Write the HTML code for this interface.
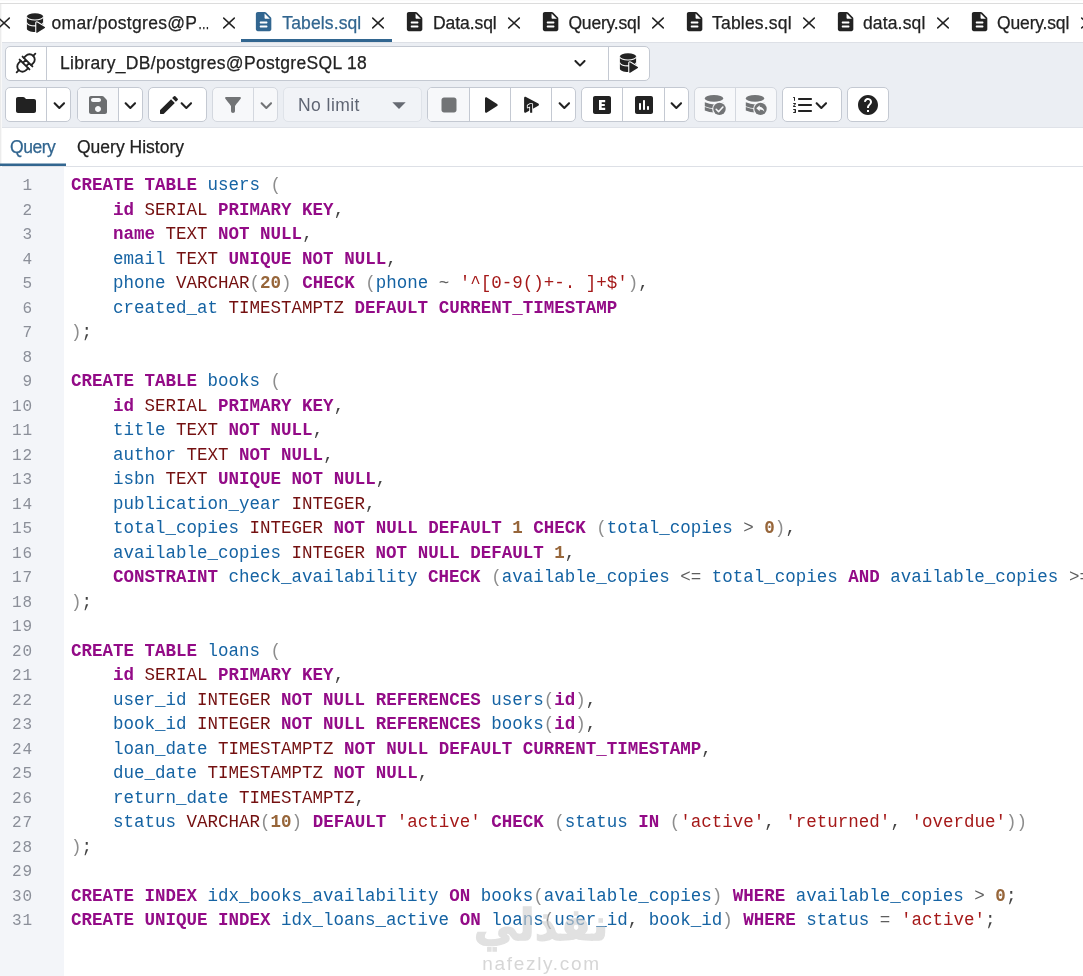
<!DOCTYPE html>
<html lang="en">
<head>
<meta charset="utf-8">
<title>pgAdmin Query Tool - Tabels.sql</title>
<style>
*{box-sizing:border-box;margin:0;padding:0}
html,body{width:1083px;height:976px;overflow:hidden;background:#fff}
body{position:relative;font-family:"Liberation Sans",sans-serif;font-size:17.5px;color:#222}
.abs{position:absolute}
#ln,#code,#tabs,#qtabs span,#conn,#sel span{will-change:transform}
.tl,#qtabs span,#conn{-webkit-text-stroke:.25px currentColor}
#topline{left:0;top:3px;width:1083px;height:1px;background:#dcdcdc}
#top0{left:0;top:0;width:1083px;height:1px;background:#fbfbfb}
#leftedge{left:0;top:4px;width:2px;height:972px;background:linear-gradient(to right,#ececec 0,#ececec 50%,#f8f8f8 50%)}
/* ---------- dock tabs ---------- */
#tabs{left:0;top:4px;width:1083px;height:38px;white-space:nowrap;overflow:hidden}
.tl{position:absolute;top:8px;height:22px;line-height:22px;font-size:17.5px;color:#222;white-space:nowrap}
.tl.act{color:#326690}
#tabul{left:241px;top:39px;width:151px;height:3px;background:#326690}
/* ---------- toolbar ---------- */
#tbbg{left:2px;top:42px;width:1081px;height:86px;background:#ebeef3;border-top:1px solid #dde0e6;border-bottom:1px solid #dfe2e8}
.grp{position:absolute;height:35px;border:1px solid #c4c9d2;border-radius:5px;background:#fff;overflow:hidden}
.grp.dis{background:#f7f8fa;border-color:#d4d8df}
.grp i{position:absolute;top:0;width:1px;height:34px;background:#c4c9d2}
.grp.dis i{background:#d4d8df}
.grp b{position:absolute;top:0;height:34px;background:#f7f8fa}
#conn{line-height:22px;font-size:17.5px;color:#222;white-space:nowrap;letter-spacing:.33px}
#sel{height:35px;border:1px solid #dfe3e9;border-radius:5px;background:#f1f3f7}
#sel span{position:absolute;left:14px;top:6px;line-height:22px;font-size:17.5px;color:#5f6573;letter-spacing:.45px;white-space:nowrap}
/* ---------- query tabs ---------- */
#qtabs{left:2px;top:128px;width:1081px;height:39px;background:#fff;border-bottom:1px solid #dde0e6}
#qtabs span{position:absolute;top:8px;line-height:22px;font-size:17.5px}
#qul{left:0;top:164px;width:66px;height:2px;background:#326690;box-shadow:0 -1px 0 rgba(50,102,144,.5)}
/* ---------- editor ---------- */
#gutter{left:0;top:167px;width:64px;height:809px;background:#f3f5f9}
#ln,#code{position:absolute;top:173.3px;font-family:"Liberation Mono",monospace;font-size:17.5px;line-height:24.5px}
#ln{left:0;top:174.1px;width:33px;text-align:right;color:#8b8f99;font-size:16px;letter-spacing:.9px}
#code{left:71px;color:#222}
#code div,#ln div{height:24.5px;white-space:pre}
.k{color:#930b87;font-weight:bold}
.t{color:#741010}
.v{color:#1563a3}
.n{color:#97663a;font-weight:bold}
.s{color:#a51919}
.p{color:#8d8d8d}
.o{color:#444}
.q{color:#5e5e5e}
/* ---------- watermark ---------- */
#wm1,#wm2{white-space:nowrap}
#wm1{left:470px;top:895px;width:142px;text-align:center;font-family:"DejaVu Sans",sans-serif;font-weight:bold;font-size:44px;line-height:60px;direction:rtl;color:#d0d0d0;-webkit-text-stroke:1.3px #d0d0d0;opacity:.64}
#wm2{left:470px;top:950.6px;width:143px;text-align:center;font-family:"Liberation Sans",sans-serif;font-size:19px;line-height:26px;letter-spacing:1.7px;color:#c8c8c8;opacity:.75}
</style>
</head>
<body>
<div class="abs" id="top0"></div>
<div class="abs" id="topline"></div>
<div class="abs" id="leftedge"></div>
<div class="abs" id="tabs">
<svg class="abs" style="left:-2.80px;top:11.50px" width="14" height="14" viewBox="-7 -7 14 14"><path d="M-5.300 -4.900L5.300 4.900M5.300 -4.900L-5.300 4.900" fill="none" stroke="#222" stroke-width="1.450" stroke-linecap="round"/></svg>
<svg class="abs" style="left:26.00px;top:8.00px" width="20" height="22" viewBox="0 0 20 22" fill="#222"><path d="M0.900 4.400v12.300c0 1.800 3.600 3.200 8.100 3.200s8.100-1.400 8.100-3.200V4.400z"/><ellipse cx="9" cy="4.400" rx="8.100" ry="3.200"/><path d="M0.700 4.800a8.300 3.250 0 0 0 16.600 0M0.700 10.600a8.300 3.250 0 0 0 16.600 0" fill="none" stroke="#fff" stroke-width="1.100"/><path d="M10.300 10.900v9.400c0 .5.500.8.900.5l7.600-4.700c.4-.25.400-.75 0-1l-7.600-4.700c-.4-.3-.9 0-.9.500z" stroke="#fff" stroke-width="2.200" stroke-linejoin="round"/><path d="M10.300 10.900v9.400c0 .5.500.8.900.5l7.600-4.700c.4-.25.400-.75 0-1l-7.600-4.700c-.4-.3-.9 0-.9.500z"/></svg>
<span class="tl" style="left:51.5px;letter-spacing:.3px">omar/postgres@P<span style="display:inline-block;letter-spacing:0;width:11px;margin-left:.8px;transform:scaleX(.66);transform-origin:0 50%">…</span></span>
<svg class="abs" style="left:221.90px;top:11.50px" width="14" height="14" viewBox="-7 -7 14 14"><path d="M-5.300 -4.900L5.300 4.900M5.300 -4.900L-5.300 4.900" fill="none" stroke="#222" stroke-width="1.450" stroke-linecap="round"/></svg>
<svg class="abs" style="left:252.13px;top:6.40px" width="23.2" height="23.2" viewBox="0 0 24 24" fill="#326690"><path d="M14.59 2.59c-.38-.38-.89-.59-1.42-.59H6c-1.1 0-2 .9-2 2v16c0 1.1.89 2 1.99 2H18c1.1 0 2-.9 2-2V8.83c0-.53-.21-1.04-.59-1.41l-4.82-4.83zM15 18H9c-.55 0-1-.45-1-1s.45-1 1-1h6c.55 0 1 .45 1 1s-.45 1-1 1zm0-4H9c-.55 0-1-.45-1-1s.45-1 1-1h6c.55 0 1 .45 1 1s-.45 1-1 1zm-2-6V3.5L18.5 9H14c-.55 0-1-.45-1-1z"/></svg>
<span class="tl act" style="left:282.3px;letter-spacing:0.127px">Tabels.sql</span>
<svg class="abs" style="left:371.20px;top:11.50px" width="14" height="14" viewBox="-7 -7 14 14"><path d="M-5.300 -4.900L5.300 4.900M5.300 -4.900L-5.300 4.900" fill="none" stroke="#222" stroke-width="1.450" stroke-linecap="round"/></svg>
<svg class="abs" style="left:403.23px;top:6.40px" width="23.2" height="23.2" viewBox="0 0 24 24" fill="#222"><path d="M14.59 2.59c-.38-.38-.89-.59-1.42-.59H6c-1.1 0-2 .9-2 2v16c0 1.1.89 2 1.99 2H18c1.1 0 2-.9 2-2V8.83c0-.53-.21-1.04-.59-1.41l-4.82-4.83zM15 18H9c-.55 0-1-.45-1-1s.45-1 1-1h6c.55 0 1 .45 1 1s-.45 1-1 1zm0-4H9c-.55 0-1-.45-1-1s.45-1 1-1h6c.55 0 1 .45 1 1s-.45 1-1 1zm-2-6V3.5L18.5 9H14c-.55 0-1-.45-1-1z"/></svg>
<span class="tl" style="left:433.0px;letter-spacing:-0.063px">Data.sql</span>
<svg class="abs" style="left:506.90px;top:11.50px" width="14" height="14" viewBox="-7 -7 14 14"><path d="M-5.300 -4.900L5.300 4.900M5.300 -4.900L-5.300 4.900" fill="none" stroke="#222" stroke-width="1.450" stroke-linecap="round"/></svg>
<svg class="abs" style="left:538.53px;top:6.40px" width="23.2" height="23.2" viewBox="0 0 24 24" fill="#222"><path d="M14.59 2.59c-.38-.38-.89-.59-1.42-.59H6c-1.1 0-2 .9-2 2v16c0 1.1.89 2 1.99 2H18c1.1 0 2-.9 2-2V8.83c0-.53-.21-1.04-.59-1.41l-4.82-4.83zM15 18H9c-.55 0-1-.45-1-1s.45-1 1-1h6c.55 0 1 .45 1 1s-.45 1-1 1zm0-4H9c-.55 0-1-.45-1-1s.45-1 1-1h6c.55 0 1 .45 1 1s-.45 1-1 1zm-2-6V3.5L18.5 9H14c-.55 0-1-.45-1-1z"/></svg>
<span class="tl" style="left:568.4px;letter-spacing:-0.177px">Query.sql</span>
<svg class="abs" style="left:650.80px;top:11.50px" width="14" height="14" viewBox="-7 -7 14 14"><path d="M-5.300 -4.900L5.300 4.900M5.300 -4.900L-5.300 4.900" fill="none" stroke="#222" stroke-width="1.450" stroke-linecap="round"/></svg>
<svg class="abs" style="left:682.73px;top:6.40px" width="23.2" height="23.2" viewBox="0 0 24 24" fill="#222"><path d="M14.59 2.59c-.38-.38-.89-.59-1.42-.59H6c-1.1 0-2 .9-2 2v16c0 1.1.89 2 1.99 2H18c1.1 0 2-.9 2-2V8.83c0-.53-.21-1.04-.59-1.41l-4.82-4.83zM15 18H9c-.55 0-1-.45-1-1s.45-1 1-1h6c.55 0 1 .45 1 1s-.45 1-1 1zm0-4H9c-.55 0-1-.45-1-1s.45-1 1-1h6c.55 0 1 .45 1 1s-.45 1-1 1zm-2-6V3.5L18.5 9H14c-.55 0-1-.45-1-1z"/></svg>
<span class="tl" style="left:712.0px;letter-spacing:0.197px">Tables.sql</span>
<svg class="abs" style="left:802.00px;top:11.50px" width="14" height="14" viewBox="-7 -7 14 14"><path d="M-5.300 -4.900L5.300 4.900M5.300 -4.900L-5.300 4.900" fill="none" stroke="#222" stroke-width="1.450" stroke-linecap="round"/></svg>
<svg class="abs" style="left:833.73px;top:6.40px" width="23.2" height="23.2" viewBox="0 0 24 24" fill="#222"><path d="M14.59 2.59c-.38-.38-.89-.59-1.42-.59H6c-1.1 0-2 .9-2 2v16c0 1.1.89 2 1.99 2H18c1.1 0 2-.9 2-2V8.83c0-.53-.21-1.04-.59-1.41l-4.82-4.83zM15 18H9c-.55 0-1-.45-1-1s.45-1 1-1h6c.55 0 1 .45 1 1s-.45 1-1 1zm0-4H9c-.55 0-1-.45-1-1s.45-1 1-1h6c.55 0 1 .45 1 1s-.45 1-1 1zm-2-6V3.5L18.5 9H14c-.55 0-1-.45-1-1z"/></svg>
<span class="tl" style="left:862.9px;letter-spacing:0.163px">data.sql</span>
<svg class="abs" style="left:935.90px;top:11.50px" width="14" height="14" viewBox="-7 -7 14 14"><path d="M-5.300 -4.900L5.300 4.900M5.300 -4.900L-5.300 4.900" fill="none" stroke="#222" stroke-width="1.450" stroke-linecap="round"/></svg>
<svg class="abs" style="left:967.73px;top:6.40px" width="23.2" height="23.2" viewBox="0 0 24 24" fill="#222"><path d="M14.59 2.59c-.38-.38-.89-.59-1.42-.59H6c-1.1 0-2 .9-2 2v16c0 1.1.89 2 1.99 2H18c1.1 0 2-.9 2-2V8.83c0-.53-.21-1.04-.59-1.41l-4.82-4.83zM15 18H9c-.55 0-1-.45-1-1s.45-1 1-1h6c.55 0 1 .45 1 1s-.45 1-1 1zm0-4H9c-.55 0-1-.45-1-1s.45-1 1-1h6c.55 0 1 .45 1 1s-.45 1-1 1zm-2-6V3.5L18.5 9H14c-.55 0-1-.45-1-1z"/></svg>
<span class="tl" style="left:997.1px;letter-spacing:-0.177px">Query.sql</span>
<svg class="abs" style="left:1079.80px;top:11.50px" width="14" height="14" viewBox="-7 -7 14 14"><path d="M-5.300 -4.900L5.300 4.900M5.300 -4.900L-5.300 4.900" fill="none" stroke="#222" stroke-width="1.450" stroke-linecap="round"/></svg>
</div>
<div class="abs" id="tabul"></div>
<div class="abs" id="tbbg"></div>
<!--TB-->
<div class="grp" style="left:5px;top:46px;width:645px"><i style="left:40px"></i><i style="left:602px"></i></div>
<svg class="abs" style="left:10.80px;top:48.00px;overflow:visible" width="30" height="30" viewBox="-15 -15 30 30"><g transform="rotate(-45)" fill="none" stroke="#222" stroke-width="1.850" stroke-linecap="round" stroke-linejoin="round"><path d="M-13.200 0H-10.200M13.200 0H10.200"/><path d="M-2.100 -5.200H-5A5.200 5.200 0 0 0 -5 5.200H-2.100M2.100 -5.200H5A5.200 5.200 0 0 1 5 5.200H2.100"/><path d="M-2.100 -7V7M2.100 -7V7M-2.100 -2.300H2.100M-2.100 2.300H2.100"/></g></svg>
<span class="abs" id="conn" style="left:60px;top:52.4px">Library_DB/postgres@PostgreSQL 18</span>
<svg class="abs" style="left:568.00px;top:51.40px" width="24" height="24" viewBox="0 0 24 24" fill="#222"><path d="M8.12 9.29 12 13.17l3.88-3.88c.39-.39 1.02-.39 1.41 0 .39.39.39 1.02 0 1.41l-4.59 4.59c-.39.39-1.02.39-1.41 0L6.7 10.7a.9959.9959 0 0 1 0-1.41c.39-.38 1.03-.39 1.42 0z"/></svg>
<svg class="abs" style="left:618.90px;top:52.20px" width="20" height="22" viewBox="0 0 20 22" fill="#222"><path d="M0.900 4.400v12.300c0 1.800 3.600 3.200 8.100 3.200s8.100-1.400 8.100-3.200V4.400z"/><ellipse cx="9" cy="4.400" rx="8.100" ry="3.200"/><path d="M0.700 4.800a8.300 3.250 0 0 0 16.600 0M0.700 10.600a8.300 3.250 0 0 0 16.600 0" fill="none" stroke="#fff" stroke-width="1.100"/><path d="M10.300 10.900v9.400c0 .5.500.8.900.5l7.600-4.700c.4-.25.400-.75 0-1l-7.600-4.700c-.4-.3-.9 0-.9.500z" stroke="#fff" stroke-width="2.200" stroke-linejoin="round"/><path d="M10.300 10.900v9.400c0 .5.500.8.900.5l7.600-4.700c.4-.25.400-.75 0-1l-7.600-4.700c-.4-.3-.9 0-.9.500z"/></svg>
<div class="grp" style="left:5px;top:87px;width:66px"><i style="left:40px"></i></div>
<svg class="abs" style="left:14.00px;top:92.80px" width="24" height="24" viewBox="0 0 24 24" fill="#222"><path d="M10.59 4.59C10.21 4.21 9.7 4 9.17 4H4c-1.1 0-1.99.9-1.99 2L2 18c0 1.1.9 2 2 2h16c1.1 0 2-.9 2-2V8c0-1.1-.9-2-2-2h-8l-1.41-1.41z"/></svg>
<svg class="abs" style="left:46.85px;top:92.65px" width="24.7" height="24.7" viewBox="0 0 24 24" fill="#222"><path d="M8.12 9.29 12 13.17l3.88-3.88c.39-.39 1.02-.39 1.41 0 .39.39.39 1.02 0 1.41l-4.59 4.59c-.39.39-1.02.39-1.41 0L6.7 10.7a.9959.9959 0 0 1 0-1.41c.39-.38 1.03-.39 1.42 0z"/></svg>
<div class="grp" style="left:77px;top:87px;width:66px"><b style="left:-1px;width:41px"></b><i style="left:40px"></i></div>
<svg class="abs" style="left:85.90px;top:93.10px" width="24" height="24" viewBox="0 0 24 24" fill="#6c6e70"><path d="M17.59 3.59c-.38-.38-.89-.59-1.42-.59H5c-1.11 0-2 .9-2 2v14c0 1.1.9 2 2 2h14c1.1 0 2-.9 2-2V7.83c0-.53-.21-1.04-.59-1.41l-2.82-2.83zM12 19c-1.66 0-3-1.34-3-3s1.34-3 3-3 3 1.34 3 3-1.34 3-3 3zm1-10H7c-1.1 0-2-.9-2-2s.9-2 2-2h6c1.1 0 2 .9 2 2s-.9 2-2 2z"/></svg>
<svg class="abs" style="left:118.45px;top:92.65px" width="24.7" height="24.7" viewBox="0 0 24 24" fill="#222"><path d="M8.12 9.29 12 13.17l3.88-3.88c.39-.39 1.02-.39 1.41 0 .39.39.39 1.02 0 1.41l-4.59 4.59c-.39.39-1.02.39-1.41 0L6.7 10.7a.9959.9959 0 0 1 0-1.41c.39-.38 1.03-.39 1.42 0z"/></svg>
<div class="grp" style="left:148px;top:87px;width:59px"></div>
<svg class="abs" style="left:157.00px;top:92.80px" width="24" height="24" viewBox="0 0 24 24" fill="#222"><path d="M3 17.46v3.04c0 .28.22.5.5.5h3.04c.13 0 .26-.05.35-.15L17.81 9.94l-3.75-3.75L3.15 17.1c-.1.1-.15.22-.15.36zM20.71 7.04c.39-.39.39-1.02 0-1.41l-2.34-2.34a.9959.9959 0 0 0-1.41 0l-1.83 1.83 3.75 3.75 1.83-1.83z"/></svg>
<svg class="abs" style="left:173.85px;top:92.65px" width="24.7" height="24.7" viewBox="0 0 24 24" fill="#222"><path d="M8.12 9.29 12 13.17l3.88-3.88c.39-.39 1.02-.39 1.41 0 .39.39.39 1.02 0 1.41l-4.59 4.59c-.39.39-1.02.39-1.41 0L6.7 10.7a.9959.9959 0 0 1 0-1.41c.39-.38 1.03-.39 1.42 0z"/></svg>
<div class="grp dis" style="left:212px;top:87px;width:66px"><i style="left:40px"></i></div>
<svg class="abs" style="left:221.00px;top:93.00px" width="24" height="24" viewBox="0 0 24 24" fill="#727476"><path d="M4.25 5.61C6.57 8.59 10 13 10 13v5c0 1.1.9 2 2 2s2-.9 2-2v-5s3.43-4.41 5.75-7.39c.51-.66.04-1.61-.8-1.61H5.04c-.83 0-1.3.95-.79 1.61z"/></svg>
<svg class="abs" style="left:253.55px;top:92.65px" width="24.7" height="24.7" viewBox="0 0 24 24" fill="#727476"><path d="M8.12 9.29 12 13.17l3.88-3.88c.39-.39 1.02-.39 1.41 0 .39.39.39 1.02 0 1.41l-4.59 4.59c-.39.39-1.02.39-1.41 0L6.7 10.7a.9959.9959 0 0 1 0-1.41c.39-.38 1.03-.39 1.42 0z"/></svg>
<div class="abs" id="sel" style="left:283px;top:87px;width:139px"><span>No limit</span></div>
<svg class="abs" style="left:383.05px;top:88.70px" width="32" height="32" viewBox="0 0 24 24" fill="#666a72"><path d="m7 10 5 5 5-5z"/></svg>
<div class="grp" style="left:427px;top:87px;width:149px"><b style="left:-1px;width:42px"></b><i style="left:41px"></i><i style="left:82px"></i><i style="left:123px"></i></div>
<svg class="abs" style="left:434.00px;top:89.80px" width="30" height="30" viewBox="0 0 24 24" fill="#727476"><path d="M8 6h8c1.1 0 2 .9 2 2v8c0 1.1-.9 2-2 2H8c-1.1 0-2-.9-2-2V8c0-1.1.9-2 2-2z"/></svg>
<svg class="abs" style="left:475.00px;top:90.00px" width="30" height="30" viewBox="0 0 24 24" fill="#222"><path d="M8 6.82v10.36c0 .79.87 1.27 1.54.84l8.14-5.18c.62-.39.62-1.29 0-1.69L9.54 5.98C8.87 5.55 8 6.03 8 6.82z"/></svg>
<svg class="abs" style="left:515px;top:90px" width="35" height="30" viewBox="515 90 35 30" fill="#222"><path d="M524.100 98v13.500c0 1 1 1.600 1.900 1.100l12.300-6.800c.9-.5.900-1.700 0-2.200l-12.300-6.700c-.9-.5-1.900.1-1.900 1.100z"/><path d="M530.100 104.100h2.100v8.700h-2.100v-6.300l-2.400 1v-2z" stroke="#fff" stroke-width="1.700" stroke-linejoin="round"/><path d="M530.100 104.100h2.100v8.700h-2.100v-6.300l-2.400 1v-2z"/></svg>
<svg class="abs" style="left:551.85px;top:92.65px" width="24.7" height="24.7" viewBox="0 0 24 24" fill="#222"><path d="M8.12 9.29 12 13.17l3.88-3.88c.39-.39 1.02-.39 1.41 0 .39.39.39 1.02 0 1.41l-4.59 4.59c-.39.39-1.02.39-1.41 0L6.7 10.7a.9959.9959 0 0 1 0-1.41c.39-.38 1.03-.39 1.42 0z"/></svg>
<div class="grp" style="left:581px;top:87px;width:108px"><i style="left:40px"></i><i style="left:82px"></i></div>
<svg class="abs" style="left:590.00px;top:93.00px" width="24" height="24" viewBox="0 0 24 24" fill="#222"><path d="M19 3H5c-1.100 0-2 .9-2 2v14c0 1.100.9 2 2 2h14c1.100 0 2-.9 2-2V5c0-1.100-.9-2-2-2zM9 7h6.200v2.300h-3.500v1.600h3.100v2.200h-3.100v1.600h3.500V17H9z"/></svg>
<svg class="abs" style="left:632.00px;top:93.00px" width="24" height="24" viewBox="0 0 24 24" fill="#222"><path d="M19 3H5c-1.1 0-2 .9-2 2v14c0 1.1.9 2 2 2h14c1.1 0 2-.9 2-2V5c0-1.1-.9-2-2-2zM8 17c-.55 0-1-.45-1-1v-5c0-.55.45-1 1-1s1 .45 1 1v5c0 .55-.45 1-1 1zm4 0c-.55 0-1-.45-1-1V8c0-.55.45-1 1-1s1 .45 1 1v8c0 .55-.45 1-1 1zm4 0c-.55 0-1-.45-1-1v-2c0-.55.45-1 1-1s1 .45 1 1v2c0 .55-.45 1-1 1z"/></svg>
<svg class="abs" style="left:663.55px;top:92.65px" width="24.7" height="24.7" viewBox="0 0 24 24" fill="#222"><path d="M8.12 9.29 12 13.17l3.88-3.88c.39-.39 1.02-.39 1.41 0 .39.39.39 1.02 0 1.41l-4.59 4.59c-.39.39-1.02.39-1.41 0L6.7 10.7a.9959.9959 0 0 1 0-1.41c.39-.38 1.03-.39 1.42 0z"/></svg>
<div class="grp dis" style="left:694px;top:87px;width:83px"><i style="left:40px"></i></div>
<svg class="abs" style="left:702.50px;top:94.80px;overflow:visible" width="26" height="24" viewBox="-11 0 26 24" fill="#727476"><ellipse cx="0" cy="3.400" rx="9.200" ry="3.400"/><path d="M-9.200 7.300Q0 11.500 9.200 7.300V11.300Q0 15.300 -9.200 11.300z"/><path d="M-9.200 12.100Q0 16.100 9.200 12.100V15.500Q0 19.500 -9.200 15.500z"/><circle cx="5.500" cy="13.900" r="7.300" fill="#f7f8fa"/><circle cx="5.500" cy="13.900" r="6.200"/><path d="M2.200 14.300l2.400 2.400 4.300-4.700" fill="none" stroke="#f7f8fa" stroke-width="1.600" stroke-linecap="round" stroke-linejoin="round"/></svg>
<svg class="abs" style="left:743.60px;top:94.80px;overflow:visible" width="26" height="24" viewBox="-11 0 26 24" fill="#727476"><ellipse cx="0" cy="3.400" rx="9.200" ry="3.400"/><path d="M-9.200 7.300Q0 11.500 9.200 7.300V11.300Q0 15.300 -9.200 11.300z"/><path d="M-9.200 12.100Q0 16.100 9.200 12.100V15.500Q0 19.500 -9.200 15.500z"/><circle cx="5.500" cy="13.900" r="7.300" fill="#f7f8fa"/><circle cx="5.500" cy="13.900" r="6.200"/><path d="M4.700 10.300L1.300 13.300l3.400 3v-1.900c2.200 0 3.700.7 4.700 2.300-.4-2.600-1.900-4.500-4.700-4.900z" fill="#f7f8fa"/></svg>
<div class="grp" style="left:782px;top:87px;width:60px"></div>
<svg class="abs" style="left:790.90px;top:93.00px" width="24" height="24" viewBox="0 0 24 24" fill="#222"><path d="M8 7h12c.55 0 1-.45 1-1s-.45-1-1-1H8c-.55 0-1 .45-1 1s.45 1 1 1zm12 10H8c-.55 0-1 .45-1 1s.45 1 1 1h12c.55 0 1-.45 1-1s-.45-1-1-1zm0-6H8c-.55 0-1 .45-1 1s.45 1 1 1h12c.55 0 1-.45 1-1s-.45-1-1-1zM4.5 16h-2c-.28 0-.5.22-.5.5s.22.5.5.5H4v.5h-.5c-.28 0-.5.22-.5.5s.22.5.5.5H4v.5H2.5c-.28 0-.5.22-.5.5s.22.5.5.5h2c.28 0 .5-.22.5-.5v-3c0-.28-.22-.5-.5-.5zm-2-11H3v2.5c0 .28.22.5.5.5s.5-.22.5-.5v-3c0-.28-.22-.5-.5-.5h-1c-.28 0-.5.22-.5.5s.22.5.5.5zm2 5h-2c-.28 0-.5.22-.5.5s.22.5.5.5h1.3l-1.68 1.96c-.08.09-.12.21-.12.32v.22c0 .28.22.5.5.5h2c.28 0 .5-.22.5-.5s-.22-.5-.5-.5H3.2l1.68-1.96c.08-.09.12-.21.12-.32v-.22c0-.28-.22-.5-.5-.5z"/></svg>
<svg class="abs" style="left:808.75px;top:92.65px" width="24.7" height="24.7" viewBox="0 0 24 24" fill="#222"><path d="M8.12 9.29 12 13.17l3.88-3.88c.39-.39 1.02-.39 1.41 0 .39.39.39 1.02 0 1.41l-4.59 4.59c-.39.39-1.02.39-1.41 0L6.7 10.7a.9959.9959 0 0 1 0-1.41c.39-.38 1.03-.39 1.42 0z"/></svg>
<div class="grp" style="left:847px;top:87px;width:42px"></div>
<svg class="abs" style="left:856.00px;top:93.00px" width="24" height="24" viewBox="0 0 24 24" fill="#222"><path d="M12 2C6.48 2 2 6.48 2 12s4.48 10 10 10 10-4.48 10-10S17.52 2 12 2zm1 17h-2v-2h2v2zm2.07-7.75-.9.92c-.5.51-.86.97-1.04 1.69-.08.32-.13.68-.13 1.14h-2v-.5c0-.46.08-.9.22-1.31.2-.58.53-1.1.95-1.52l1.24-1.26c.46-.44.68-1.1.55-1.8-.13-.72-.69-1.33-1.39-1.53-1.11-.31-2.14.32-2.47 1.27-.12.37-.43.65-.82.65h-.3C8.4 9 8 8.44 8.16 7.88c.43-1.47 1.68-2.59 3.23-2.83 1.52-.24 2.97.55 3.87 1.8 1.18 1.63.83 3.38-.19 4.4z"/></svg>
<!--/TB-->
<div class="abs" id="qtabs"><span style="left:8px;color:#326690;letter-spacing:-.45px">Query</span><span style="left:74.5px">Query History</span></div>
<div class="abs" id="qul"></div>
<div class="abs" id="gutter"></div>
<div id="ln">
<div>1</div>
<div>2</div>
<div>3</div>
<div>4</div>
<div>5</div>
<div>6</div>
<div>7</div>
<div>8</div>
<div>9</div>
<div>10</div>
<div>11</div>
<div>12</div>
<div>13</div>
<div>14</div>
<div>15</div>
<div>16</div>
<div>17</div>
<div>18</div>
<div>19</div>
<div>20</div>
<div>21</div>
<div>22</div>
<div>23</div>
<div>24</div>
<div>25</div>
<div>26</div>
<div>27</div>
<div>28</div>
<div>29</div>
<div>30</div>
<div>31</div>
</div>
<div id="code">
<div><span class="k">CREATE</span> <span class="k">TABLE</span> <span class="v">users</span> <span class="p">(</span></div>
<div>    <span class="k">id</span> <span class="t">SERIAL</span> <span class="k">PRIMARY</span> <span class="k">KEY</span><span class="o">,</span></div>
<div>    <span class="k">name</span> <span class="t">TEXT</span> <span class="k">NOT</span> <span class="k">NULL</span><span class="o">,</span></div>
<div>    <span class="v">email</span> <span class="t">TEXT</span> <span class="k">UNIQUE</span> <span class="k">NOT</span> <span class="k">NULL</span><span class="o">,</span></div>
<div>    <span class="v">phone</span> <span class="t">VARCHAR</span><span class="p">(</span><span class="n">20</span><span class="p">)</span> <span class="k">CHECK</span> <span class="p">(</span><span class="v">phone</span> <span class="q">~</span> <span class="s">'^[0-9()+-. ]+$'</span><span class="p">)</span><span class="o">,</span></div>
<div>    <span class="v">created_at</span> <span class="t">TIMESTAMPTZ</span> <span class="k">DEFAULT</span> <span class="k">CURRENT_TIMESTAMP</span></div>
<div><span class="p">)</span><span class="o">;</span></div>
<div></div>
<div><span class="k">CREATE</span> <span class="k">TABLE</span> <span class="v">books</span> <span class="p">(</span></div>
<div>    <span class="k">id</span> <span class="t">SERIAL</span> <span class="k">PRIMARY</span> <span class="k">KEY</span><span class="o">,</span></div>
<div>    <span class="v">title</span> <span class="t">TEXT</span> <span class="k">NOT</span> <span class="k">NULL</span><span class="o">,</span></div>
<div>    <span class="v">author</span> <span class="t">TEXT</span> <span class="k">NOT</span> <span class="k">NULL</span><span class="o">,</span></div>
<div>    <span class="v">isbn</span> <span class="t">TEXT</span> <span class="k">UNIQUE</span> <span class="k">NOT</span> <span class="k">NULL</span><span class="o">,</span></div>
<div>    <span class="v">publication_year</span> <span class="t">INTEGER</span><span class="o">,</span></div>
<div>    <span class="v">total_copies</span> <span class="t">INTEGER</span> <span class="k">NOT</span> <span class="k">NULL</span> <span class="k">DEFAULT</span> <span class="n">1</span> <span class="k">CHECK</span> <span class="p">(</span><span class="v">total_copies</span> <span class="q">&gt;</span> <span class="n">0</span><span class="p">)</span><span class="o">,</span></div>
<div>    <span class="v">available_copies</span> <span class="t">INTEGER</span> <span class="k">NOT</span> <span class="k">NULL</span> <span class="k">DEFAULT</span> <span class="n">1</span><span class="o">,</span></div>
<div>    <span class="k">CONSTRAINT</span> <span class="v">check_availability</span> <span class="k">CHECK</span> <span class="p">(</span><span class="v">available_copies</span> <span class="q">&lt;</span><span class="q">=</span> <span class="v">total_copies</span> <span class="k">AND</span> <span class="v">available_copies</span> <span class="q">&gt;</span><span class="q">=</span> <span class="n">0</span><span class="p">)</span></div>
<div><span class="p">)</span><span class="o">;</span></div>
<div></div>
<div><span class="k">CREATE</span> <span class="k">TABLE</span> <span class="v">loans</span> <span class="p">(</span></div>
<div>    <span class="k">id</span> <span class="t">SERIAL</span> <span class="k">PRIMARY</span> <span class="k">KEY</span><span class="o">,</span></div>
<div>    <span class="v">user_id</span> <span class="t">INTEGER</span> <span class="k">NOT</span> <span class="k">NULL</span> <span class="k">REFERENCES</span> <span class="v">users</span><span class="p">(</span><span class="k">id</span><span class="p">)</span><span class="o">,</span></div>
<div>    <span class="v">book_id</span> <span class="t">INTEGER</span> <span class="k">NOT</span> <span class="k">NULL</span> <span class="k">REFERENCES</span> <span class="v">books</span><span class="p">(</span><span class="k">id</span><span class="p">)</span><span class="o">,</span></div>
<div>    <span class="v">loan_date</span> <span class="t">TIMESTAMPTZ</span> <span class="k">NOT</span> <span class="k">NULL</span> <span class="k">DEFAULT</span> <span class="k">CURRENT_TIMESTAMP</span><span class="o">,</span></div>
<div>    <span class="v">due_date</span> <span class="t">TIMESTAMPTZ</span> <span class="k">NOT</span> <span class="k">NULL</span><span class="o">,</span></div>
<div>    <span class="v">return_date</span> <span class="t">TIMESTAMPTZ</span><span class="o">,</span></div>
<div>    <span class="v">status</span> <span class="t">VARCHAR</span><span class="p">(</span><span class="n">10</span><span class="p">)</span> <span class="k">DEFAULT</span> <span class="s">'active'</span> <span class="k">CHECK</span> <span class="p">(</span><span class="v">status</span> <span class="k">IN</span> <span class="p">(</span><span class="s">'active'</span><span class="o">,</span> <span class="s">'returned'</span><span class="o">,</span> <span class="s">'overdue'</span><span class="p">)</span><span class="p">)</span></div>
<div><span class="p">)</span><span class="o">;</span></div>
<div></div>
<div><span class="k">CREATE</span> <span class="k">INDEX</span> <span class="v">idx_books_availability</span> <span class="k">ON</span> <span class="v">books</span><span class="p">(</span><span class="v">available_copies</span><span class="p">)</span> <span class="k">WHERE</span> <span class="v">available_copies</span> <span class="q">&gt;</span> <span class="n">0</span><span class="o">;</span></div>
<div><span class="k">CREATE</span> <span class="k">UNIQUE</span> <span class="k">INDEX</span> <span class="v">idx_loans_active</span> <span class="k">ON</span> <span class="v">loans</span><span class="p">(</span><span class="v">user_id</span><span class="o">,</span> <span class="v">book_id</span><span class="p">)</span> <span class="k">WHERE</span> <span class="v">status</span> <span class="q">=</span> <span class="s">'active'</span><span class="o">;</span></div>
</div>
<div class="abs" id="wm1">نفذلي</div>
<div class="abs" id="wm2">nafezly.com</div>
</body>
</html>
